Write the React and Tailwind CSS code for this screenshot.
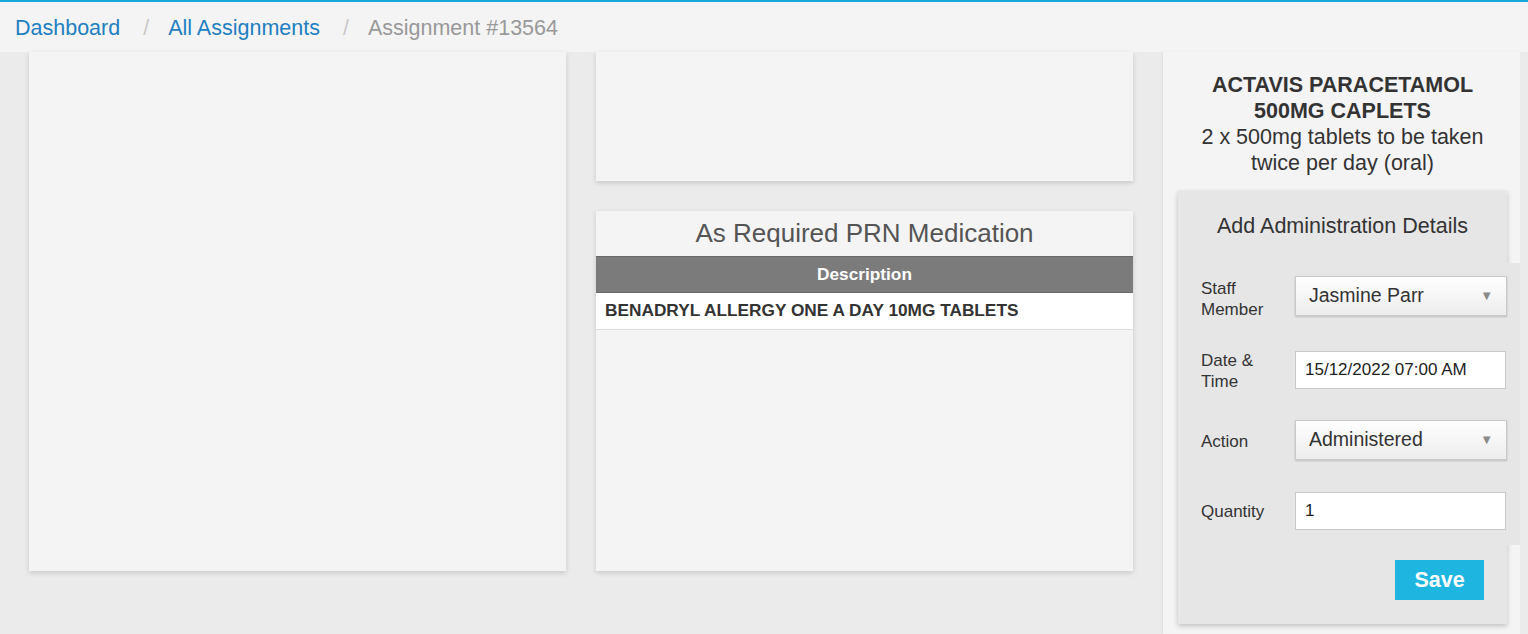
import React from "react";

//? breadcrumb trail
const crumbs = [
  { label: "Dashboard", link: true },
  { label: "All Assignments", link: true },
  { label: "Assignment #13564", link: false },
];

function Breadcrumb() {
  return (
    <div className="h-[52px] border-t-2 border-[#17a8dc] bg-[#f4f4f4] flex items-center pt-[2px] pl-[15px] text-[21.5px]">
      {crumbs.map((c, i) => (
        <React.Fragment key={c.label}>
          {i > 0 && <span className="text-[#c8c8c8] ml-[23px] mr-[19px]">/</span>}
          <span className={c.link ? "text-[#1f7fc2]" : "text-[#999]"}>{c.label}</span>
        </React.Fragment>
      ))}
    </div>
  );
}

function SelectBox({ value }) {
  return (
    <div className="w-[212px] h-[40px] shrink-0 border border-[#c9c9c9] bg-linear-to-b from-white to-[#ececec] shadow-[0_1px_2px_rgba(0,0,0,0.18)] flex items-center justify-between pl-[13px] pr-[13px]">
      <span className="text-[19.5px] text-[#333]">{value}</span>
      <span className="text-[13px] text-[#8a8a8a]">▼</span>
    </div>
  );
}

function TextBox({ value }) {
  return (
    <div className="w-[211px] h-[38px] shrink-0 border border-[#c9c9c9] bg-white flex items-center pl-[9px] text-[17px] text-[#222]">
      {value}
    </div>
  );
}

function FormRow({ label, children, className, labelClass = "" }) {
  return (
    <div className={"flex items-center " + className}>
      <div className={"w-[94px] shrink-0 text-[17px] leading-[21px] text-[#333] " + labelClass}>
        {label}
      </div>
      {children}
    </div>
  );
}

function AdminPanel() {
  return (
    <div className="w-[357px] h-[582px] bg-[#f4f4f4] shadow-[-1px_0_2px_rgba(0,0,0,0.06)] pt-[20px] pl-[15px] pr-[13px]">
      <div className="text-center text-[#333] text-[21.5px] leading-[26px]">
        <div className="font-bold">
          ACTAVIS PARACETAMOL
          <br />
          500MG CAPLETS
        </div>
        <div>
          2 x 500mg tablets to be taken
          <br />
          twice per day (oral)
        </div>
      </div>

      <div className="mt-[15px] w-[329px] h-[433px] bg-[#e6e6e6] shadow-[0_2px_5px_rgba(0,0,0,0.22)]">
        <div className="pt-[23px] text-center text-[21.5px] leading-[24px] text-[#333]">
          Add Administration Details
        </div>
        <div className="mt-[25px] -mr-[13px] pr-[13px] pl-[23px] pt-[13px] bg-[#e6e6e6] h-[282px]">
          <FormRow label={<>Staff<br />Member</>} className="h-[40px]" labelClass="pt-[5px]">
            <SelectBox value="Jasmine Parr" />
          </FormRow>
          <FormRow label={<>Date &amp;<br />Time</>} className="h-[38px] mt-[35px]" labelClass="pt-[2px]">
            <TextBox value="15/12/2022 07:00 AM" />
          </FormRow>
          <FormRow label="Action" className="h-[40px] mt-[31px]" labelClass="pt-[2px]">
            <SelectBox value="Administered" />
          </FormRow>
          <FormRow label="Quantity" className="h-[38px] mt-[32px]">
            <TextBox value="1" />
          </FormRow>
        </div>
        <div className="flex justify-end pr-[23px] pt-[15px]">
          <button
            type="button"
            className="w-[89px] h-[40px] bg-[#1fb5e1] text-white font-bold text-[21.5px]"
          >
            Save
          </button>
        </div>
      </div>
    </div>
  );
}

function App() {
  return (
    <div className="w-[1528px] h-[634px] overflow-hidden bg-[#ebebeb] font-['Liberation_Sans',Arial,sans-serif]">
      <Breadcrumb />
      <div className="flex pl-[29px] gap-[30px]">
        <div className="w-[537px] h-[519px] bg-[#f4f4f4] shadow-[0_2px_5px_rgba(0,0,0,0.15)]" />

        <div className="w-[537px] flex flex-col gap-[30px]">
          <div className="h-[129px] bg-[#f4f4f4] shadow-[0_2px_5px_rgba(0,0,0,0.15)]" />
          <div className="h-[360px] bg-[#f4f4f4] shadow-[0_2px_5px_rgba(0,0,0,0.15)]">
            <div className="h-[45px] flex items-center justify-center text-[26px] text-[#555]">
              As Required PRN Medication
            </div>
            <div className="h-[37px] bg-[#7b7b7b] border-y border-[#6a6a6a] flex items-center justify-center text-white font-bold text-[17.25px]">
              Description
            </div>
            <div className="h-[37px] bg-white border-b border-[#dcdcdc] flex items-center pl-[9px] text-[17.25px] font-bold text-[#333]">
              BENADRYL ALLERGY ONE A DAY 10MG TABLETS
            </div>
          </div>
        </div>

        <AdminPanel />
      </div>
    </div>
  );
}

export default App;
